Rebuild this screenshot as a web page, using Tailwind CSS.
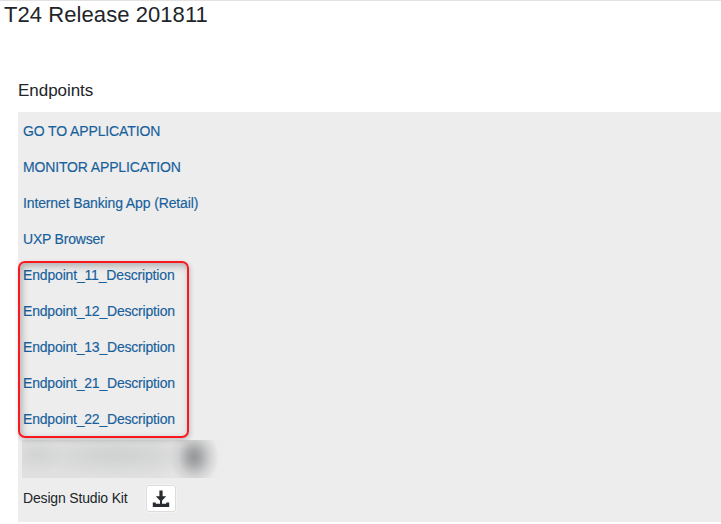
<!DOCTYPE html>
<html lang="en">
<head>
<meta charset="utf-8">
<title>T24 Release 201811</title>
<script src="https://cdn.jsdelivr.net/npm/@tailwindcss/browser@4"></script>
</head>
<body class="h-[524px] overflow-hidden border-t border-[#e2e2e2] bg-white font-['Liberation_Sans',Arial,sans-serif] text-[#212529]">
  <h1 class="h-[76px] pl-1 text-[22px] leading-7 tracking-[0.07px] whitespace-nowrap">T24 Release 201811</h1>
  <main class="pl-[18px]">
    <h2 class="h-[35px] pt-px text-[17px] leading-[26px] tracking-[-0.04px]">Endpoints</h2>
    <section class="relative h-[410px] bg-[#ededed] pl-[5px] text-sm">
      <ul class="pt-px text-[#17609b] [-webkit-text-stroke:0.15px_#17609b]">
        <li class="flex h-9 items-center"><a class="tracking-[-0.12px]">GO TO APPLICATION</a></li>
        <li class="flex h-9 items-center"><a class="tracking-[-0.15px]">MONITOR APPLICATION</a></li>
        <li class="flex h-9 items-center"><a class="tracking-[-0.13px]">Internet Banking App (Retail)</a></li>
        <li class="flex h-9 items-center"><a class="tracking-[-0.2px]">UXP Browser</a></li>
        <li class="flex h-9 items-center"><a class="tracking-[-0.17px]">Endpoint_11_Description</a></li>
        <li class="flex h-9 items-center"><a class="tracking-[-0.2px]">Endpoint_12_Description</a></li>
        <li class="flex h-9 items-center"><a class="tracking-[-0.2px]">Endpoint_13_Description</a></li>
        <li class="flex h-9 items-center"><a class="tracking-[-0.2px]">Endpoint_21_Description</a></li>
        <li class="flex h-9 items-center"><a class="tracking-[-0.2px]">Endpoint_22_Description</a></li>
      </ul>
      <div class="mt-[3px] -ml-px h-[38px] w-[203px] bg-[radial-gradient(ellipse_25px_29px_at_172px_17px,#96989a_0%,#a3a5a7_22%,#b9babb_42%,#d2d2d2_65%,transparent_100%),radial-gradient(ellipse_28px_20px_at_15px_15px,#d2d3d3,transparent),radial-gradient(ellipse_90px_22px_at_96px_15px,#d2d3d3_20%,transparent),linear-gradient(90deg,#e0e0e0_65%,#ededed)]"></div>
      <div class="flex h-[41px] items-center">
        <span class="-mt-0.5 w-[123px] tracking-[-0.17px]">Design Studio Kit</span>
        <button class="flex h-[27px] w-[30px] items-center justify-center rounded-[3px] border border-[#dcdcdc] bg-white shadow-[0_0_0_1px_#f3f3f3]" aria-label="Download">
          <svg class="h-[18px] w-[18px]" viewBox="0 0 18 18" fill="#292d31"><path d="M7.4 0.5h3.2v5.8h3.6L9 11.8 3.8 6.3h3.6zM.8 12.5h3v1.3h10.4v-1.3h3v4.5H.8z"/><path d="M8 10h2v5H8z"/></svg>
        </button>
      </div>
      <div class="absolute top-[149px] left-0 h-[177px] w-[171px] rounded-[7px] border-2 border-[#f91820] shadow-[1px_2px_5px_#0003,inset_2px_3px_7px_#0004]"></div>
    </section>
  </main>
</body>
</html>
